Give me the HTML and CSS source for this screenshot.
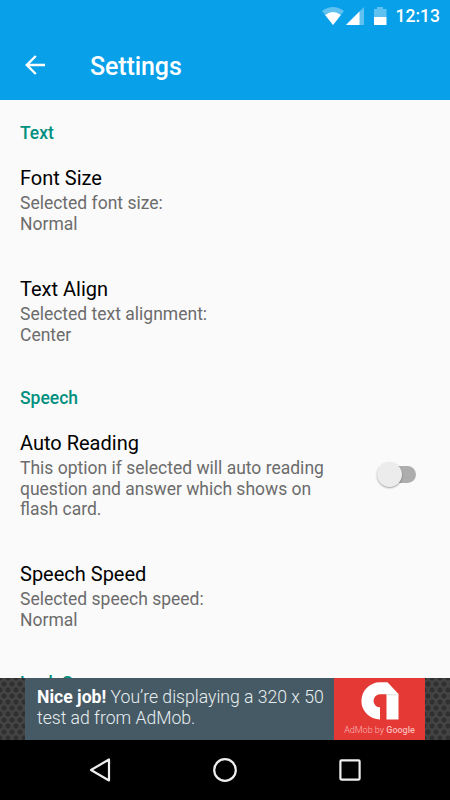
FILE: index.html
```html
<!DOCTYPE html>
<html lang="en">

<head>
    <meta charset="utf-8" />
    <title>Settings</title>
    <link rel="stylesheet" href="styles.css">
</head>

<body>
    <div class="status-bar">
        <svg class="status-icons" width="66" height="20" viewBox="0 0 66 20">
            <path d="M0 5 Q11 -3 22 5 L11 19 Z" fill="#fff" fill-opacity=".35" />
            <path d="M3.2 9 Q11 3.2 18.8 9 L11 19 Z" fill="#fff" />
            <path d="M42 1 V19 H24 Z" fill="#fff" fill-opacity=".35" />
            <path d="M37.5 5.5 V19 H24 Z" fill="#fff" />
            <path d="M52 3 H55 V1 H61 V3 H64.5 V11 H52 Z" fill="#fff" fill-opacity=".35" />
            <path d="M52 11 H64.5 V19 H52 Z" fill="#fff" />
        </svg>
        <span class="clock">12:13</span>
    </div>
    <header class="toolbar">
        <svg class="back" width="20" height="20" viewBox="0 0 20 20" fill="none" stroke="#fff" stroke-width="2.4">
            <path d="M20 10 H2 M10.8 1 L1.8 10 L10.8 19" />
        </svg>
        <h1>Settings</h1>
    </header>

    <main class="settings">
        <h2>Text</h2>
        <div class="pref">
            <div>
                <h3>Font Size</h3>
                <p>Selected font size:<br>Normal</p>
            </div>
        </div>
        <div class="pref">
            <div>
                <h3>Text Align</h3>
                <p>Selected text alignment:<br>Center</p>
            </div>
        </div>
        <h2>Speech</h2>
        <div class="pref">
            <div>
                <h3>Auto Reading</h3>
                <p>This option if selected will auto reading<br>question and answer which shows on<br>flash card.</p>
            </div>
            <div class="switch"><span class="thumb"></span></div>
        </div>
        <div class="pref">
            <div>
                <h3>Speech Speed</h3>
                <p>Selected speech speed:<br>Normal</p>
            </div>
        </div>
        <h2>Lock Screen</h2>
    </main>

    <div class="ad">
        <div class="ad-text"><b>Nice job!</b> You’re displaying a 320 x 50<br>test ad from AdMob.</div>
        <div class="ad-logo">
            <svg width="38" height="38" viewBox="0 0 38 38">
                <path d="M19 .3 H26.5 L37.5 12 V37.5 H25.5 V12.3 H19 A6.5 6.5 0 0 0 19 25.3 V37.5 A18.6 18.6 0 0 1 19 .3 Z" fill="#fff" />
                <path d="M25.5 12.3 H37.5 V13.3 H25.5 Z" fill="#ddd" />
            </svg>
            <span>AdMob by <b>Google</b></span>
        </div>
    </div>

    <nav class="nav-bar">
        <svg width="24" height="24" viewBox="0 0 24 24"><path d="M21 1.5 V22.5 L3 12 Z" /></svg>
        <svg width="24" height="24" viewBox="0 0 24 24"><circle cx="12" cy="12" r="10.8" /></svg>
        <svg width="24" height="24" viewBox="0 0 24 24"><rect x="2.4" y="2.4" width="19.2" height="19.2" rx="1" /></svg>
    </nav>
</body>

</html>
```
FILE: styles.css
```css
body {
    display: flex;
    flex-direction: column;
    width: 450px;
    height: 800px;
    margin: 0;
    overflow: hidden;
    font-family: Roboto, "Liberation Sans", sans-serif;
    background-color: #fafafa;
}

h1, h2, h3, p {
    margin: 0;
}

.status-bar {
    display: flex;
    justify-content: flex-end;
    align-items: center;
    gap: 8px;
    height: 30px;
    padding-right: 10px;
    background-color: #08a0e8;
    color: white;
}

.status-icons {
    margin-top: 1px;
}

.clock {
    font-size: 17.5px;
    font-weight: 500;
    line-height: 30px;
    margin-top: 1px;
}

.toolbar {
    display: flex;
    align-items: center;
    height: 70px;
    background-color: #08a0e8;
    color: white;
}

.back {
    margin-left: 25px;
}

.toolbar h1 {
    margin: 2px 0 0 45px;
    font-size: 25px;
    font-weight: 500;
    letter-spacing: -0.1px;
}

.settings {
    flex: 1;
    min-height: 0;
    overflow: hidden;
}

.settings h2 {
    height: 20px;
    padding: 23px 20px 0;
    font-size: 17.5px;
    font-weight: 500;
    line-height: 20px;
    color: #009080;
}

.pref {
    display: flex;
    justify-content: space-between;
    padding: 22.9px 34px 19.9px 20px;
}

.pref h3 {
    font-size: 20px;
    font-weight: 400;
    line-height: 24px;
    margin-bottom: 3.2px;
    color: black;
}

.pref p {
    font-size: 17.5px;
    line-height: 20.5px;
    color: #6c6c6c;
}

.switch {
    align-self: center;
    width: 34px;
    height: 17px;
    margin-bottom: 2px;
    border-radius: 9px;
    background-color: #adadad;
}

.thumb {
    display: block;
    width: 25px;
    height: 25px;
    margin: -4px 0 0 -5.5px;
    border-radius: 50%;
    background-color: #ececec;
    box-shadow: 0 1px 2px rgba(0, 0, 0, 0.35);
}

.ad {
    display: flex;
    justify-content: center;
    height: 62px;
    background-color: #444;
    background-image: radial-gradient(circle, #303030 2px, transparent 3px), radial-gradient(circle, #303030 2px, transparent 3px);
    background-size: 8px 12px;
    background-position: 0 0, 4px 6px;
}

.ad-text {
    width: 297px;
    padding: 9px 0 0 12px;
    height: 53px;
    font-size: 17.6px;
    font-weight: 300;
    line-height: 21px;
    white-space: nowrap;
    background-color: #465a65;
    color: #e8eef0;
}

.ad-text b {
    font-weight: 700;
    color: white;
}

.ad-logo {
    display: flex;
    flex-direction: column;
    align-items: center;
    width: 91px;
    padding-top: 4px;
    height: 58px;
    background-color: #e53935;
    color: #f8bcba;
}

.ad-logo span {
    margin-top: 4px;
    font-size: 9px;
    font-weight: 300;
    line-height: 12px;
}

.ad-logo b {
    font-weight: 500;
}

.nav-bar {
    display: flex;
    justify-content: space-between;
    align-items: center;
    height: 60px;
    padding: 0 88px;
    background-color: black;
    fill: none;
    stroke: #eee;
    stroke-width: 2.2;
    stroke-linejoin: round;
}
```
